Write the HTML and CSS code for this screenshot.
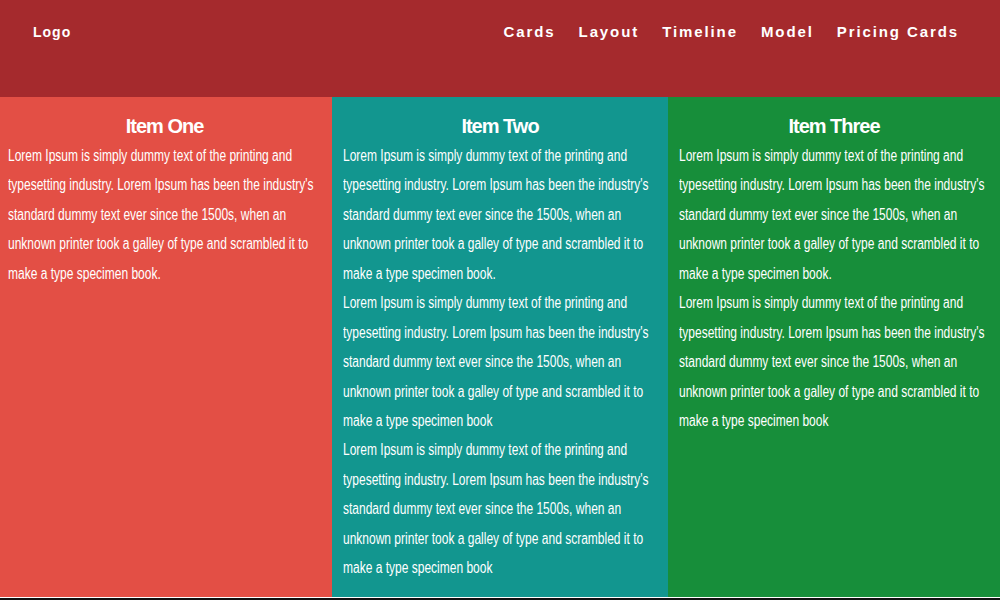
FILE: index.html
```html
<!DOCTYPE html>
<html>
<head>
<meta charset="utf-8">
<link rel="stylesheet" href="styles.css">
</head>
<body>
<header class="topbar">
  <div class="logo">Logo</div>
  <nav class="nav">
    <a href="#">Cards</a>
    <a href="#">Layout</a>
    <a href="#">Timeline</a>
    <a href="#">Model</a>
    <a href="#">Pricing Cards</a>
  </nav>
</header>
<main class="columns">
  <section class="col col-one">
    <h2>Item One</h2>
    <p>Lorem Ipsum is simply dummy text of the printing and typesetting industry. Lorem Ipsum has been the industry's standard dummy text ever since the 1500s, when an unknown printer took a galley of type and scrambled it to make a type specimen book.</p>
  </section>
  <section class="col col-two">
    <h2>Item Two</h2>
    <p>Lorem Ipsum is simply dummy text of the printing and typesetting industry. Lorem Ipsum has been the industry's standard dummy text ever since the 1500s, when an unknown printer took a galley of type and scrambled it to make a type specimen book.</p>
    <p>Lorem Ipsum is simply dummy text of the printing and typesetting industry. Lorem Ipsum has been the industry's standard dummy text ever since the 1500s, when an unknown printer took a galley of type and scrambled it to make a type specimen book</p>
    <p>Lorem Ipsum is simply dummy text of the printing and typesetting industry. Lorem Ipsum has been the industry's standard dummy text ever since the 1500s, when an unknown printer took a galley of type and scrambled it to make a type specimen book</p>
  </section>
  <section class="col col-three">
    <h2>Item Three</h2>
    <p>Lorem Ipsum is simply dummy text of the printing and typesetting industry. Lorem Ipsum has been the industry's standard dummy text ever since the 1500s, when an unknown printer took a galley of type and scrambled it to make a type specimen book.</p>
    <p>Lorem Ipsum is simply dummy text of the printing and typesetting industry. Lorem Ipsum has been the industry's standard dummy text ever since the 1500s, when an unknown printer took a galley of type and scrambled it to make a type specimen book</p>
  </section>
</main>
<div class="footer-line"></div>
</body>
</html>
```
FILE: styles.css
```css
* { box-sizing: border-box; }
html, body {
  margin: 0;
  padding: 0;
  background: #ffffff;
  font-family: "Liberation Sans", Arial, sans-serif;
}
.topbar {
  height: 97px;
  background: #a52a2d;
  display: flex;
  align-items: flex-start;
  justify-content: space-between;
  padding: 22px 41px 0 33px;
  color: #ffffff;
}
.logo {
  font-weight: bold;
  font-size: 14px;
  letter-spacing: 1px;
  line-height: 20px;
}
.nav {
  display: flex;
  gap: 23px;
}
.nav a {
  color: #ffffff;
  text-decoration: none;
  font-weight: bold;
  font-size: 15px;
  letter-spacing: 1.9px;
  line-height: 20px;
}
.columns {
  display: grid;
  grid-template-columns: 332px 336px 332px;
  height: 500px;
}
.col {
  color: #ffffff;
  padding: 0 11px;
  overflow: hidden;
}
.col-one { background: #e34f45; padding-left: 8px; }
.col-two { background: #12968f; }
.col-three { background: #178e3a; }
.col h2 {
  margin: 16px 0 0;
  text-align: center;
  font-size: 20px;
  line-height: 26px;
  font-weight: bold;
  letter-spacing: -1px;
}
.col p {
  margin: 0;
  width: 133.33%;
  transform: scaleX(0.75);
  transform-origin: left top;
  font-size: 16px;
  line-height: 29.43px;
}
.col h2 + p { padding-top: 2px; }
.footer-line {
  height: 3px;
  border-top: 1px solid #ffffff;
  background: #111111;
}
```
